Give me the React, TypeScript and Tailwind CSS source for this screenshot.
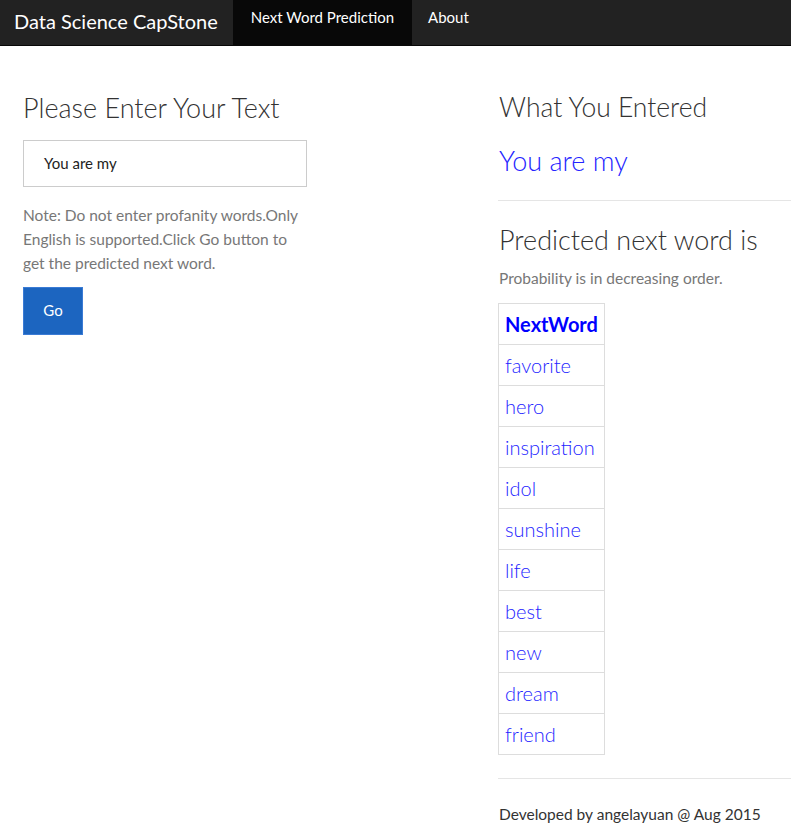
const words = [
  "favorite",
  "hero",
  "inspiration",
  "idol",
  "sunshine",
  "life",
  "best",
  "new",
  "dream",
  "friend",
];

export default function App() {
  return (
    <div className="min-h-[837px] overflow-hidden bg-white font-['Lato',sans-serif] text-[15px] text-[#333]">
      <nav className="flex h-[46px] items-stretch border-b border-[#080808] bg-[#222]">
        <div className="pl-[14px] pr-[15px] pt-[6px] text-[20px] text-white">Data Science CapStone</div>
        <div className="bg-[#080808] px-[18px] pt-[6px] text-[15px] text-white">Next Word Prediction</div>
        <div className="px-[16px] pt-[6px] text-[15px] text-white">About</div>
      </nav>

      <div className="flex pt-[47px]">
        <div className="ml-[23px] w-[284px]">
          <h3 className="text-[27px] font-light leading-[1.1] text-[#333]">Please Enter Your Text</h3>
          <div className="mt-[17px] flex h-[47px] items-center border border-[#ccc] px-[20px] text-[15px] text-[#222]">
            You are my
          </div>
          <p className="mt-[16px] text-[15.5px] leading-[24px] text-[#777]">
            Note: Do not enter profanity words.Only English is supported.Click Go button to get the
            predicted next word.
          </p>
          <button className="mt-[12px] h-[48px] w-[60px] border border-[#3a7bd5] bg-[#1c65c0] text-[15px] text-white">
            Go
          </button>
        </div>

        <div className="ml-[192px] flex-1">
          <h3 className="text-[26.5px] font-light leading-[1.1] text-[#333]">What You Entered</h3>
          <div className="mt-[24px] text-[27px] font-light leading-[1.1] text-[#2424ff]">You are my</div>
          <hr className="-ml-px mt-[24px] border-t border-[#e5e5e5]" />
          <h3 className="mt-[24px] text-[27px] font-light leading-[1.1] text-[#333]">
            Predicted next word is
          </h3>
          <p className="mt-[12px] text-[15.5px] text-[#777]">Probability is in decreasing order.</p>
          <table className="-ml-px mt-[13px] border-collapse">
            <thead>
              <tr>
                <th className="h-[41px] border border-[#ddd] px-[6px] text-left text-[20px] font-bold text-[#0000ff]">
                  NextWord
                </th>
              </tr>
            </thead>
            <tbody>
              {words.map((w) => (
                <tr key={w}>
                  <td className="h-[41px] border border-[#ddd] px-[6px] text-[20px] font-light text-[#2424ff]">
                    {w}
                  </td>
                </tr>
              ))}
            </tbody>
          </table>
          <hr className="-ml-px mt-[23px] border-t border-[#e5e5e5]" />
          <p className="mt-[24px] text-[15.5px] text-[#333]">Developed by angelayuan @ Aug 2015</p>
        </div>
      </div>
    </div>
  );
}
